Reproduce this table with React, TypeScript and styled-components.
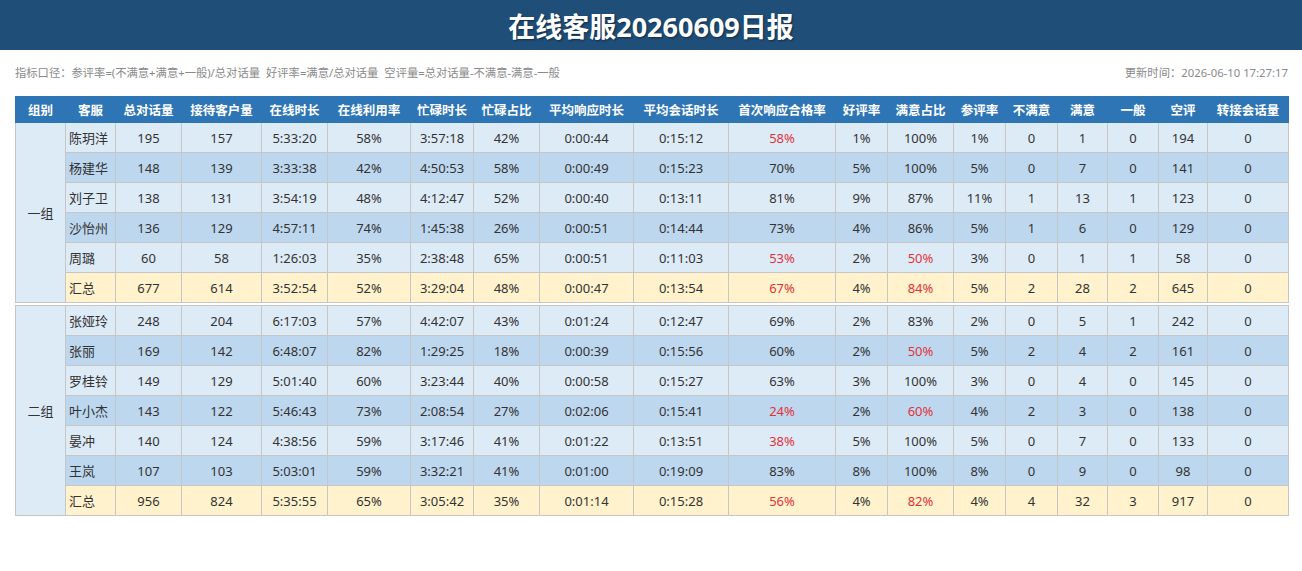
import React, { FC } from 'react';
import styled, { createGlobalStyle } from 'styled-components';

const GlobalStyle = createGlobalStyle`
    html, body {
        margin: 0;
        padding: 0;
        background: #fff;
    }
    body {
        font-family: "Noto Sans", "Noto Sans CJK SC", sans-serif;
        color: #333;
    }
`;

type Row = {
    name: string;
    vals: string[];
    red?: number[];
    total?: boolean;
};

type Group = {
    label: string;
    rows: Row[];
};

const columns: { title: string; width: number }[] = [
    { title: '组别', width: 50 },
    { title: '客服', width: 50 },
    { title: '总对话量', width: 66 },
    { title: '接待客户量', width: 80 },
    { title: '在线时长', width: 66 },
    { title: '在线利用率', width: 83 },
    { title: '忙碌时长', width: 63 },
    { title: '忙碌占比', width: 66 },
    { title: '平均响应时长', width: 94 },
    { title: '平均会话时长', width: 95 },
    { title: '首次响应合格率', width: 107 },
    { title: '好评率', width: 52 },
    { title: '满意占比', width: 66 },
    { title: '参评率', width: 52 },
    { title: '不满意', width: 52 },
    { title: '满意', width: 50 },
    { title: '一般', width: 51 },
    { title: '空评', width: 49 },
    { title: '转接会话量', width: 81 },
];

// vals index: 0 总对话量 ... 8 首次响应合格率, 10 满意占比
const groups: Group[] = [
    {
        label: '一组',
        rows: [
            { name: '陈玥洋', vals: ['195', '157', '5:33:20', '58%', '3:57:18', '42%', '0:00:44', '0:15:12', '58%', '1%', '100%', '1%', '0', '1', '0', '194', '0'], red: [8] },
            { name: '杨建华', vals: ['148', '139', '3:33:38', '42%', '4:50:53', '58%', '0:00:49', '0:15:23', '70%', '5%', '100%', '5%', '0', '7', '0', '141', '0'] },
            { name: '刘子卫', vals: ['138', '131', '3:54:19', '48%', '4:12:47', '52%', '0:00:40', '0:13:11', '81%', '9%', '87%', '11%', '1', '13', '1', '123', '0'] },
            { name: '沙怡州', vals: ['136', '129', '4:57:11', '74%', '1:45:38', '26%', '0:00:51', '0:14:44', '73%', '4%', '86%', '5%', '1', '6', '0', '129', '0'] },
            { name: '周璐', vals: ['60', '58', '1:26:03', '35%', '2:38:48', '65%', '0:00:51', '0:11:03', '53%', '2%', '50%', '3%', '0', '1', '1', '58', '0'], red: [8, 10] },
            { name: '汇总', vals: ['677', '614', '3:52:54', '52%', '3:29:04', '48%', '0:00:47', '0:13:54', '67%', '4%', '84%', '5%', '2', '28', '2', '645', '0'], red: [8, 10], total: true },
        ],
    },
    {
        label: '二组',
        rows: [
            { name: '张娅玲', vals: ['248', '204', '6:17:03', '57%', '4:42:07', '43%', '0:01:24', '0:12:47', '69%', '2%', '83%', '2%', '0', '5', '1', '242', '0'] },
            { name: '张丽', vals: ['169', '142', '6:48:07', '82%', '1:29:25', '18%', '0:00:39', '0:15:56', '60%', '2%', '50%', '5%', '2', '4', '2', '161', '0'], red: [10] },
            { name: '罗桂铃', vals: ['149', '129', '5:01:40', '60%', '3:23:44', '40%', '0:00:58', '0:15:27', '63%', '3%', '100%', '3%', '0', '4', '0', '145', '0'] },
            { name: '叶小杰', vals: ['143', '122', '5:46:43', '73%', '2:08:54', '27%', '0:02:06', '0:15:41', '24%', '2%', '60%', '4%', '2', '3', '0', '138', '0'], red: [8, 10] },
            { name: '晏冲', vals: ['140', '124', '4:38:56', '59%', '3:17:46', '41%', '0:01:22', '0:13:51', '38%', '5%', '100%', '5%', '0', '7', '0', '133', '0'], red: [8] },
            { name: '王岚', vals: ['107', '103', '5:03:01', '59%', '3:32:21', '41%', '0:01:00', '0:19:09', '83%', '8%', '100%', '8%', '0', '9', '0', '98', '0'] },
            { name: '汇总', vals: ['956', '824', '5:35:55', '65%', '3:05:42', '35%', '0:01:14', '0:15:28', '56%', '4%', '82%', '4%', '4', '32', '3', '917', '0'], red: [8, 10], total: true },
        ],
    },
];

const Page = styled.div`
    width: 1302px;
`;

const TitleBar = styled.header`
    height: 50px;
    background: #1f4e79;
    display: flex;
    align-items: center;
    justify-content: center;
`;

const Title = styled.h1`
    margin: 0;
    color: #fff;
    font-size: 27px;
    font-weight: 700;
    text-shadow: 1px 1px 2px rgba(0, 0, 0, 0.45);
`;

const Content = styled.main`
    padding: 12px 14px 0 15px;
`;

const InfoBar = styled.div`
    display: flex;
    justify-content: space-between;
    align-items: center;
    height: 20px;
    font-size: 11.3px;
    color: #8a8a8a;
    margin-bottom: 14px;
`;

const Formula = styled.span`
    margin-right: 6px;
`;

const Table = styled.table`
    width: 1273px;
    border-collapse: collapse;
    table-layout: fixed;
    font-size: 13px;
`;

const HeadCell = styled.th`
    height: 25px;
    padding: 0;
    background: #2e75b6;
    color: #fff;
    font-weight: 700;
    font-size: 12.5px;
    text-align: center;
    border: 1px solid #2e75b6;
    white-space: nowrap;
`;

const BodyRow = styled.tr<{ $tone: 'light' | 'dark' | 'total' }>`
    height: 30px;
    background: ${({ $tone }) =>
        $tone === 'total' ? '#fff2cc' : $tone === 'dark' ? '#bdd7ee' : '#ddebf7'};
`;

const Cell = styled.td<{ $red?: boolean; $left?: boolean }>`
    padding: 0 0 0 ${({ $left }) => ($left ? '3px' : '0')};
    border: 1px solid #c6c6c6;
    text-align: ${({ $left }) => ($left ? 'left' : 'center')};
    color: ${({ $red }) => ($red ? '#e0333a' : '#333')};
    white-space: nowrap;
`;

const GroupCell = styled.td`
    padding: 0;
    border: 1px solid #c6c6c6;
    background: #ddebf7;
    text-align: center;
    color: #333;
`;

const SpacerCell = styled.td`
    height: 2px;
    padding: 0;
    border-left: none;
    border-right: none;
    background: #fff;
    font-size: 0;
    line-height: 0;
`;

const App: FC = () => {
    return (
        <Page>
            <GlobalStyle />
            <TitleBar>
                <Title>在线客服20260609日报</Title>
            </TitleBar>
            <Content>
                <InfoBar>
                    <div>
                        <Formula>指标口径：参评率=(不满意+满意+一般)/总对话量</Formula>
                        <Formula>好评率=满意/总对话量</Formula>
                        <Formula>空评量=总对话量-不满意-满意-一般</Formula>
                    </div>
                    <div>更新时间：2026-06-10 17:27:17</div>
                </InfoBar>
                <Table>
                    <colgroup>
                        {columns.map((c) => (
                            <col key={c.title} style={{ width: c.width }} />
                        ))}
                    </colgroup>
                    <thead>
                        <tr>
                            {columns.map((c) => (
                                <HeadCell key={c.title}>{c.title}</HeadCell>
                            ))}
                        </tr>
                    </thead>
                    {groups.map((g, gi) => (
                        <tbody key={g.label}>
                            {gi > 0 && (
                                <tr>
                                    <SpacerCell colSpan={columns.length} />
                                </tr>
                            )}
                            {g.rows.map((r, ri) => (
                                <BodyRow key={r.name + ri} $tone={r.total ? 'total' : ri % 2 ? 'dark' : 'light'}>
                                    {ri === 0 && <GroupCell rowSpan={g.rows.length}>{g.label}</GroupCell>}
                                    <Cell $left>{r.name}</Cell>
                                    {r.vals.map((v, vi) => (
                                        <Cell key={vi} $red={r.red?.includes(vi)}>
                                            {v}
                                        </Cell>
                                    ))}
                                </BodyRow>
                            ))}
                        </tbody>
                    ))}
                </Table>
            </Content>
        </Page>
    );
};

export default App;
